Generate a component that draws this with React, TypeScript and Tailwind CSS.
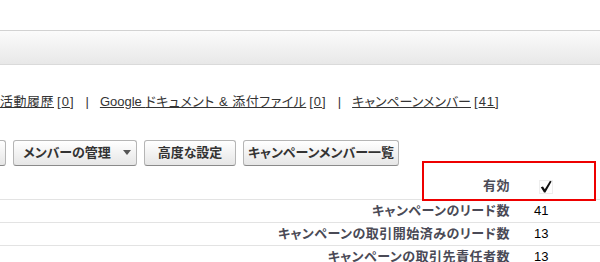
import { ReactNode } from 'react';

const JP = "font-['Liberation_Sans','Noto_Sans_CJK_JP',sans-serif]";

function Button({ width, children }: { width: string; children: ReactNode }) {
  return (
    <button
      className={`${width} h-[26px] shrink-0 flex items-center justify-center rounded-[3px] border border-[#b5b5b5] border-b-[#8a8a8a] bg-gradient-to-b from-white to-[#e6e6e6] text-[13px] font-bold text-[#333] [font-feature-settings:'palt']`}
    >
      {children}
    </button>
  );
}

function Row({ label, children, first }: { label: string; children: ReactNode; first?: boolean }) {
  return (
    <div className={`flex items-center border-b border-[#e3e3e3] ${first ? 'h-[34px] pt-[6px]' : 'h-[23px]'}`}>
      <div className="w-[522px] pr-[12px] text-right text-[13px] font-bold text-[#4a4a56] whitespace-nowrap tracking-[0.5px] [font-feature-settings:'palt']">
        {label}
      </div>
      <div className="pl-[12px] text-[13px] text-black">{children}</div>
    </div>
  );
}

function Count({ n }: { n: string }) {
  return (
    <span className="ml-[3px] tracking-[1px]">
      [<span className="underline">{n}</span>]
    </span>
  );
}

export default function App() {
  return (
    <div className={`relative w-[600px] h-[262px] overflow-hidden bg-white ${JP}`}>
      {/* header bar */}
      <div className="mt-[30px] h-[35px] border-t border-b border-t-[#d2d2d2] border-b-[#dadada] bg-gradient-to-b from-[#fbfbfb] to-[#e8e8e8]" />

      {/* related list links */}
      <div className="mt-[28px] h-[17px] flex items-center text-[13px] text-[#333] whitespace-nowrap [font-feature-settings:'palt']">
        <span className="underline tracking-[0.5px]">活動履歴</span>
        <Count n="0" />
        <span className="px-[11px]">|</span>
        <span className="underline">
          Google <span className="tracking-[0.5px]">ドキュメント &amp; 添付ファイル</span>
        </span>
        <Count n="0" />
        <span className="px-[11px]">|</span>
        <span className="underline">キャンペーンメンバー</span>
        <Count n="41" />
      </div>

      {/* buttons */}
      <div className="mt-[30px] flex gap-[7px] ml-[-60px]">
        <Button width="w-[66px]">編集</Button>
        <Button width="w-[124px]">
          <span className="pl-[4px]">メンバーの管理</span>
          <svg width="8" height="6" viewBox="0 0 8 6" className="ml-[12px]">
            <path d="M0 0H8L4 5Z" fill="#555" />
          </svg>
        </Button>
        <Button width="w-[92px]">高度な設定</Button>
        <Button width="w-[156px]">キャンペーンメンバー一覧</Button>
      </div>

      {/* detail table */}
      <div>
        <Row label="有効" first>
          <svg width="14" height="14" viewBox="0 0 14 14" className="mt-[2px] ml-[5px]">
            <rect x="0.5" y="0.5" width="13" height="13" fill="none" stroke="#dcdcdc" strokeDasharray="1 1" />
            <path d="M1.8 7.2L4 6.4L5.8 9.2L11 0.8L12.6 1.6L6.4 12.6L5 12.6Z" fill="#111" />
          </svg>
        </Row>
        <Row label="キャンペーンのリード数">41</Row>
        <Row label="キャンペーンの取引開始済みのリード数">13</Row>
        <Row label="キャンペーンの取引先責任者数">13</Row>
      </div>

      {/* highlight box */}
      <div className="absolute left-[422px] top-[161px] w-[174px] h-[40px] border-2 border-[#ee0000]" />
    </div>
  );
}
